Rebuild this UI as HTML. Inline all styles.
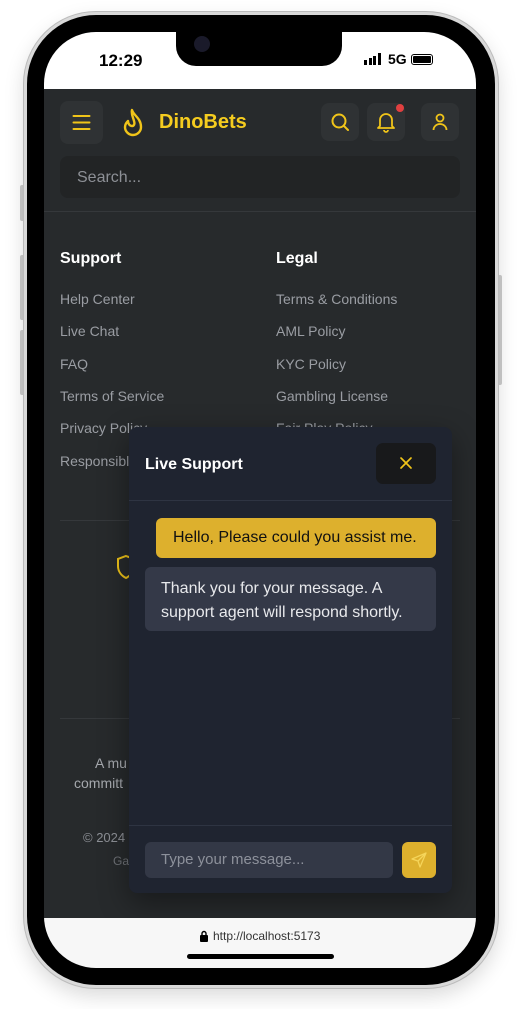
<!DOCTYPE html>
<html><head><meta charset="utf-8"><style>
*{margin:0;padding:0;box-sizing:border-box}
body{width:529px;height:1009px;background:#fff;position:relative;overflow:hidden;font-family:"Liberation Sans",sans-serif}
.abs{position:absolute}
.frame{left:24px;top:12px;width:474px;height:976px;border-radius:72px;background:#000;border:3px solid #d9d9d9;box-shadow:0 0 0 1px #bbb,0 8px 20px rgba(0,0,0,.15)}
.screen{left:44px;top:32px;width:432px;height:936px;border-radius:52px;overflow:hidden;background:#272a2c}
.btn{background:#2f3234;border-radius:8px;position:absolute}
.link{position:absolute;color:#9a9da3;font-size:14px}
.h{position:absolute;color:#fff;font-size:16px;font-weight:bold}
</style></head><body>
<div class="abs" style="left:20px;top:185px;width:5px;height:36px;background:#ccc;border-radius:2px"></div>
<div class="abs" style="left:20px;top:255px;width:5px;height:65px;background:#ccc;border-radius:2px"></div>
<div class="abs" style="left:20px;top:330px;width:5px;height:65px;background:#ccc;border-radius:2px"></div>
<div class="abs" style="left:497px;top:275px;width:5px;height:110px;background:#ccc;border-radius:2px"></div>
<div class="abs frame"></div>
<div class="abs screen">
 <div class="abs" style="left:0;top:0;width:432px;height:57px;background:#fff"></div>
 <div class="abs" style="left:132px;top:0;width:166px;height:34px;background:#000;border-radius:0 0 20px 20px"></div>
 <div class="abs" style="left:150px;top:4px;width:16px;height:16px;background:#1a1a2a;border-radius:50%"></div>
 <div class="abs" style="left:55px;top:19px;font-size:17px;font-weight:bold;color:#000">12:29</div>
 <div class="abs" style="left:320px;top:21px;display:flex;align-items:flex-end;gap:1.5px">
  <div style="width:3px;height:5px;background:#000"></div><div style="width:3px;height:7px;background:#000"></div><div style="width:3px;height:9px;background:#000"></div><div style="width:3px;height:12px;background:#000"></div></div>
 <div class="abs" style="left:344px;top:19px;font-size:14px;font-weight:bold;color:#000">5G</div>
 <div class="abs" style="left:367px;top:22px;width:22px;height:11px;border:1.5px solid #000;border-radius:3px;padding:1px"><div style="width:100%;height:100%;background:#000;border-radius:1px"></div></div>
 <!-- header -->
 <div class="btn" style="left:16px;top:69px;width:43px;height:43px"></div>
 <svg class="abs" style="left:28px;top:82px" width="19" height="17" viewBox="0 0 19 17"><path d="M1.5 2h16M1.5 8.5h16M1.5 15h16" stroke="#f0c419" stroke-width="2" stroke-linecap="round"/></svg>
 <svg class="abs" style="left:77px;top:75px" width="26" height="32" viewBox="0 0 26 32"><path d="M11 3c1 5 9 8 9 17a8 8 0 0 1-16 0c0-3 2-5 3-6c0 3 2 5 4 5c2 0 3-2 2-5c-1-4-3-7-2-11z" fill="none" stroke="#f0c419" stroke-width="2.4" stroke-linejoin="round"/></svg>
 <div class="abs" style="left:115px;top:79px;font-size:20px;font-weight:bold;color:#f5cc1f">DinoBets</div>
 <div class="btn" style="left:277px;top:71px;width:38px;height:38px"></div>
 <svg class="abs" style="left:286px;top:80px" width="20" height="20" viewBox="0 0 20 20"><circle cx="9" cy="9" r="6.5" fill="none" stroke="#f0c419" stroke-width="2"/><path d="M14 14l4 4" stroke="#f0c419" stroke-width="2" stroke-linecap="round"/></svg>
 <div class="btn" style="left:323px;top:71px;width:38px;height:38px"></div>
 <svg class="abs" style="left:332px;top:79px" width="20" height="22" viewBox="0 0 20 22"><path d="M4 15V9a6 6 0 0 1 12 0v6l2 2H2z" fill="none" stroke="#f0c419" stroke-width="1.8" stroke-linejoin="round"/><path d="M8 19a2 2 0 0 0 4 0" fill="none" stroke="#f0c419" stroke-width="1.8"/></svg>
 <div class="abs" style="left:352px;top:72px;width:8px;height:8px;background:#e04040;border-radius:50%"></div>
 <div class="btn" style="left:377px;top:71px;width:38px;height:38px"></div>
 <svg class="abs" style="left:386px;top:80px" width="20" height="20" viewBox="0 0 20 20"><circle cx="10" cy="6" r="3.5" fill="none" stroke="#f0c419" stroke-width="1.8"/><path d="M3.5 18a6.5 6 0 0 1 13 0" fill="none" stroke="#f0c419" stroke-width="1.8"/></svg>
 <div class="abs" style="left:16px;top:124px;width:400px;height:42px;background:#222425;border-radius:8px"></div>
 <div class="abs" style="left:33px;top:137px;font-size:16px;color:#8d9096">Search...</div>
 <div class="abs" style="left:0;top:179px;width:432px;height:1px;background:#35383b"></div>
 <!-- footer -->
 <div class="h" style="left:16px;top:218px">Support</div>
 <div class="h" style="left:232px;top:218px">Legal</div>
 <div class="link" style="left:16px;top:259px">Help Center</div>
 <div class="link" style="left:16px;top:291px">Live Chat</div>
 <div class="link" style="left:16px;top:324px">FAQ</div>
 <div class="link" style="left:16px;top:356px">Terms of Service</div>
 <div class="link" style="left:16px;top:388px">Privacy Policy</div>
 <div class="link" style="left:16px;top:421px">Responsible Gaming</div>
 <div class="link" style="left:232px;top:259px">Terms &amp; Conditions</div>
 <div class="link" style="left:232px;top:291px">AML Policy</div>
 <div class="link" style="left:232px;top:324px">KYC Policy</div>
 <div class="link" style="left:232px;top:356px">Gambling License</div>
 <div class="link" style="left:232px;top:388px">Fair Play Policy</div>
 <div class="abs" style="left:16px;top:488px;width:400px;height:1px;background:#35383b"></div>
 <svg class="abs" style="left:72px;top:522px" width="20" height="26" viewBox="0 0 20 26"><path d="M10 2l8 3v7c0 6-4 10-8 12c-4-2-8-6-8-12V5z" fill="none" stroke="#f0c419" stroke-width="2"/></svg>
 <div class="abs" style="left:16px;top:686px;width:400px;height:1px;background:#35383b"></div>
 <div class="abs" style="left:51px;top:723px;font-size:14px;color:#a5a8ad">A mu</div>
 <div class="abs" style="left:30px;top:743px;font-size:14px;color:#a5a8ad">committ</div>
 <div class="abs" style="left:39px;top:798px;font-size:13px;color:#8d9096">© 2024</div>
 <div class="abs" style="left:69px;top:822px;font-size:12px;color:#6f7277">Ga</div>
 <!-- chat -->
 <div class="abs" style="left:85px;top:395px;width:323px;height:466px;background:#1f2430;border-radius:8px;box-shadow:0 10px 30px rgba(0,0,0,.4)">
  <div class="abs" style="left:16px;top:29px;font-size:16px;font-weight:bold;color:#fff">Live Support</div>
  <div class="abs" style="left:247px;top:16px;width:60px;height:41px;background:#18191b;border-radius:7px"></div>
  <svg class="abs" style="left:270px;top:29px" width="14" height="14" viewBox="0 0 14 14"><path d="M2 2l10 10M12 2L2 12" stroke="#f0c419" stroke-width="1.7" stroke-linecap="round"/></svg>
  <div class="abs" style="left:0;top:73px;width:323px;height:1px;background:#2e3442"></div>
  <div class="abs" style="left:27px;top:91px;width:280px;height:40px;background:#ddb02d;border-radius:6px;font-size:16px;color:#111;padding:11px 0 0 17px">Hello, Please could you assist me.</div>
  <div class="abs" style="left:16px;top:140px;width:291px;height:64px;background:#343948;border-radius:6px;font-size:16px;color:#e8e9ec;padding:10px 16px;line-height:24px">Thank you for your message. A support agent will respond shortly.</div>
  <div class="abs" style="left:0;top:398px;width:323px;height:1px;background:#2e3442"></div>
 </div>
 <div class="abs" style="left:101px;top:810px;width:248px;height:36px;background:#333846;border-radius:6px;font-size:15px;color:#8d919b;padding:9px 16px">Type your message...</div>
 <div class="abs" style="left:358px;top:810px;width:34px;height:36px;background:#ddb02d;border-radius:6px"></div>
 <svg class="abs" style="left:366px;top:819px" width="18" height="18" viewBox="0 0 18 18"><path d="M16 2L2 8l6 2l2 6z M8 10l8-8" fill="none" stroke="#f5d55a" stroke-width="1.3" stroke-linejoin="round"/></svg>
 <!-- bottom bar -->
 <div class="abs" style="left:0;top:886px;width:432px;height:50px;background:#f7f7f7"></div>
 <svg class="abs" style="left:155px;top:898px" width="10" height="12" viewBox="0 0 10 12"><rect x="1" y="5" width="8" height="7" rx="1" fill="#000"/><path d="M3 5V3.5a2 2 0 0 1 4 0V5" fill="none" stroke="#000" stroke-width="1.4"/></svg>
 <div class="abs" style="left:169px;top:897px;font-size:12px;color:#333">http://localhost:5173</div>
 <div class="abs" style="left:143px;top:922px;width:147px;height:5px;background:#000;border-radius:3px"></div>
</div>
</body></html>
